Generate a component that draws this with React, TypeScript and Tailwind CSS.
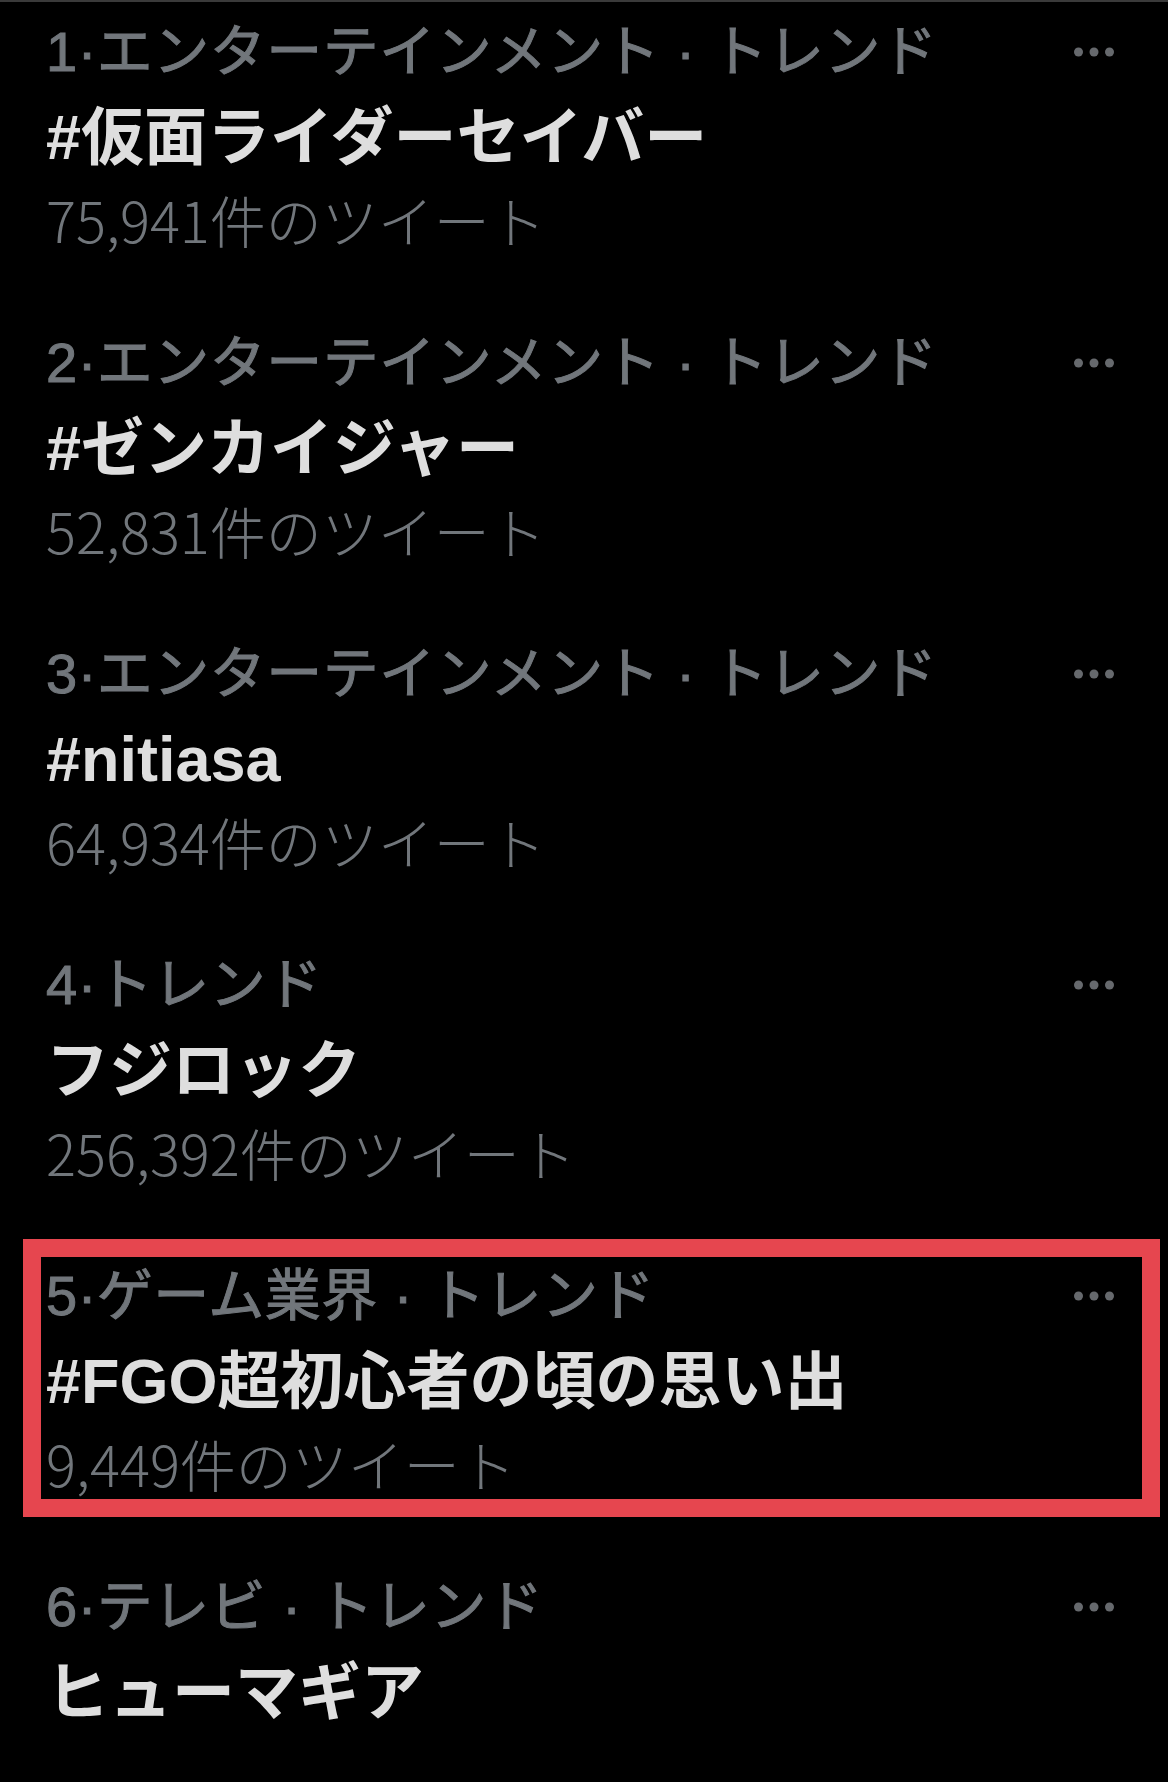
import React from "react";

type Trend = {
  rank: number;
  category: string;
  title: string;
  count?: string;
  highlight?: boolean;
};

const trends: Trend[] = [
  { rank: 1, category: "エンターテインメント · トレンド", title: "#仮面ライダーセイバー", count: "75,941件のツイート" },
  { rank: 2, category: "エンターテインメント · トレンド", title: "#ゼンカイジャー", count: "52,831件のツイート" },
  { rank: 3, category: "エンターテインメント · トレンド", title: "#nitiasa", count: "64,934件のツイート" },
  { rank: 4, category: "トレンド", title: "フジロック", count: "256,392件のツイート" },
  { rank: 5, category: "ゲーム業界 · トレンド", title: "#FGO超初心者の頃の思い出", count: "9,449件のツイート", highlight: true },
  { rank: 6, category: "テレビ · トレンド", title: "ヒューマギア" },
];

function Dots() {
  return (
    <svg width="40" height="10" viewBox="0 0 40 10" className="shrink-0">
      <circle cx="4.5" cy="5" r="4.5" fill="#66696d" />
      <circle cx="20" cy="5" r="4.5" fill="#66696d" />
      <circle cx="35.5" cy="5" r="4.5" fill="#66696d" />
    </svg>
  );
}

function Row({ t }: { t: Trend }) {
  return (
    <div className="relative h-[311px] pl-[46px] pr-[54px]">
      {t.highlight && (
        <div className="pointer-events-none absolute left-[23px] right-[8px] top-[-15px] h-[278px] border-[18px] border-[#e6464f]" />
      )}
      <div className="flex h-[84px] items-center justify-between">
        <div
          className="text-[56px] font-normal leading-[84px] tracking-[0.5px] text-[#71767b] whitespace-nowrap [-webkit-text-stroke:1px_#71767b]"
          style={{ fontFamily: '"Liberation Sans", "Noto Sans CJK JP", sans-serif' }}
        >
          {t.rank}·{t.category}
        </div>
        <Dots />
      </div>
      <div
        className="h-[86px] text-[63px] font-bold leading-[86px] text-[#dedede] whitespace-nowrap"
        style={{ fontFamily: '"Liberation Sans", "Noto Sans CJK JP", sans-serif' }}
      >
        {t.title}
      </div>
      {t.count && (
        <div
          className="h-[78px] text-[56px] font-light leading-[78px] text-[#71767b] whitespace-nowrap"
          style={{ fontFamily: '"Noto Sans CJK JP", sans-serif' }}
        >
          {t.count}
        </div>
      )}
    </div>
  );
}

export default function App() {
  return (
    <div className="h-[1782px] w-[1168px] overflow-hidden bg-black">
      <div className="border-t-2 border-[#3a3a3a] pt-[8px]">
        {trends.map((t) => (
          <Row key={t.rank} t={t} />
        ))}
      </div>
    </div>
  );
}
